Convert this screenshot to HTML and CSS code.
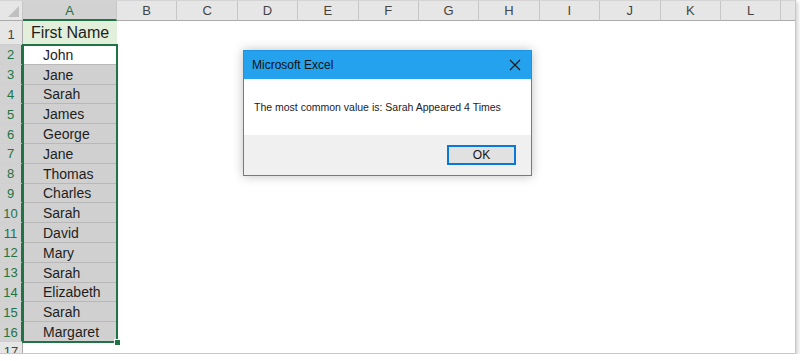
FILE: index.html
```html
<!DOCTYPE html>
<html lang="en">
<head>
    <meta charset="UTF-8">
    <title>Most Common Value</title>
    <link rel="stylesheet" href="styles.css">
</head>
<body>
    <div class="sheet">
        <div class="col-heads">
            <div class="corner"><span class="corner-tri"></span></div>
            <div class="col-head active">A</div>
            <div class="col-head">B</div>
            <div class="col-head">C</div>
            <div class="col-head">D</div>
            <div class="col-head">E</div>
            <div class="col-head">F</div>
            <div class="col-head">G</div>
            <div class="col-head">H</div>
            <div class="col-head">I</div>
            <div class="col-head">J</div>
            <div class="col-head">K</div>
            <div class="col-head">L</div>
            <div class="col-head last"></div>
        </div>

        <div class="grid-body">
            <div class="row-heads">
                <div class="row-head first">1</div>
                <div class="row-head active">2</div>
                <div class="row-head active">3</div>
                <div class="row-head active">4</div>
                <div class="row-head active">5</div>
                <div class="row-head active">6</div>
                <div class="row-head active">7</div>
                <div class="row-head active">8</div>
                <div class="row-head active">9</div>
                <div class="row-head active">10</div>
                <div class="row-head active">11</div>
                <div class="row-head active">12</div>
                <div class="row-head active">13</div>
                <div class="row-head active">14</div>
                <div class="row-head active">15</div>
                <div class="row-head active">16</div>
                <div class="row-head">17</div>
            </div>

            <div class="col-a">
                <div class="cell title-cell">First Name</div>
                <div class="selection">
                    <div class="cell current">John</div>
                    <div class="cell picked">Jane</div>
                    <div class="cell picked">Sarah</div>
                    <div class="cell picked">James</div>
                    <div class="cell picked">George</div>
                    <div class="cell picked">Jane</div>
                    <div class="cell picked">Thomas</div>
                    <div class="cell picked">Charles</div>
                    <div class="cell picked">Sarah</div>
                    <div class="cell picked">David</div>
                    <div class="cell picked">Mary</div>
                    <div class="cell picked">Sarah</div>
                    <div class="cell picked">Elizabeth</div>
                    <div class="cell picked">Sarah</div>
                    <div class="cell picked">Margaret</div>
                    <span class="fill-handle"></span>
                </div>
            </div>
        </div>

        <div class="msgbox">
            <div class="msgbox-title">
                <span>Microsoft Excel</span>
                <svg class="close" width="12" height="12" viewBox="0 0 12 12">
                    <path d="M1 1 L11 11 M11 1 L1 11" stroke="#1a1a1a" stroke-width="1.2" fill="none"/>
                </svg>
            </div>
            <div class="msgbox-text">The most common value is: Sarah Appeared 4 Times</div>
            <div class="msgbox-foot">
                <button class="ok-btn">OK</button>
            </div>
        </div>
    </div>
</body>
</html>
```

FILE: styles.css
```css
body {
    margin: 0;
    background: #fff;
    font-family: 'Liberation Sans', Arial, sans-serif;
    color: #222;
}
.sheet {
    position: relative;
    width: 795px;
    height: 353px;
    overflow: hidden;
    background: #fff;
    border-right: 1px solid #c8c8c8;
    border-bottom: 1px solid #c8c8c8;
    box-shadow: 2px 2px 4px rgba(0,0,0,0.18);
}
.col-heads {
    display: grid;
    grid-template-columns: 23px 94px repeat(11, 60.4px) 1fr;
    height: 21px;
    background: #e6e6e6;
    border-top: 1px solid #d4d4d4;
    box-sizing: border-box;
}
.corner {
    position: relative;
    border-right: 1px solid #c6c6c6;
    border-bottom: 1px solid #ababab;
}
.corner-tri {
    position: absolute;
    right: 3px;
    bottom: 3px;
    width: 0;
    height: 0;
    border-left: 11px solid transparent;
    border-bottom: 11px solid #c0c0c0;
}
.col-head {
    display: flex;
    align-items: center;
    justify-content: center;
    font-size: 13px;
    color: #444;
    border-right: 1px solid #c6c6c6;
    border-bottom: 1px solid #ababab;
}
.col-head.active {
    background: #d2d2d2;
    color: #217346;
    border-bottom: 2px solid #217346;
}
.col-head.last {
    border-right: none;
}
.grid-body {
    display: flex;
}
.row-heads {
    width: 23px;
    background: #e6e6e6;
}
.row-head {
    height: 19.8px;
    box-sizing: border-box;
    display: flex;
    align-items: center;
    justify-content: center;
    padding-top: 1px;
    font-size: 13px;
    color: #444;
    border-bottom: 1px solid #cfcfcf;
    border-right: 1px solid #ababab;
}
.row-head.first {
    height: 24px;
    padding-top: 3px;
}
.row-head.active {
    background: #d2d2d2;
    color: #217346;
    border-right: 2px solid #217346;
}
.col-a {
    width: 94px;
}
.cell {
    height: 19.8px;
    box-sizing: border-box;
    display: flex;
    align-items: center;
    padding: 1px 0 0 20px;
    font-size: 14px;
    color: #1e1e1e;
    border-bottom: 1px solid #b8b8b8;
}
.title-cell {
    height: 24px;
    padding: 1px 0 0 0;
    justify-content: center;
    font-size: 16px;
    background: #e2efda;
    border-bottom: 1px solid #d0d0d0;
}
.selection {
    position: relative;
    outline: 2px solid #217346;
    outline-offset: -1px;
}
.cell.current {
    background: #fff;
}
.cell.picked {
    background: #d0d0d0;
}
.fill-handle {
    position: absolute;
    right: -4px;
    bottom: -4px;
    width: 5px;
    height: 5px;
    background: #217346;
    border: 1px solid #fff;
}
.msgbox {
    position: absolute;
    left: 243px;
    top: 50px;
    width: 289px;
    height: 126px;
    box-sizing: border-box;
    border: 1px solid #1c93e3;
    background: #fff;
    display: flex;
    flex-direction: column;
    box-shadow: 0 0 10px rgba(0,0,0,0.25);
}
.msgbox-title {
    height: 28px;
    background: #25a2ee;
    display: flex;
    align-items: center;
    justify-content: space-between;
    padding: 0 10px 0 8px;
    font-size: 12px;
    color: #111;
}
.close {
    display: block;
}
.msgbox-text {
    flex: 1;
    display: flex;
    align-items: center;
    padding-left: 10px;
    font-size: 10.5px;
    color: #1a1a2a;
}
.msgbox-foot {
    height: 40px;
    background: #f0f0f0;
    display: flex;
    align-items: center;
    justify-content: flex-end;
    padding-right: 15px;
}
.ok-btn {
    width: 69px;
    height: 20px;
    box-sizing: border-box;
    background: #e1e1e1;
    border: 2px solid #0a78d7;
    font-family: 'Liberation Sans', Arial, sans-serif;
    font-size: 12px;
    color: #111;
    padding: 0;
}
```
